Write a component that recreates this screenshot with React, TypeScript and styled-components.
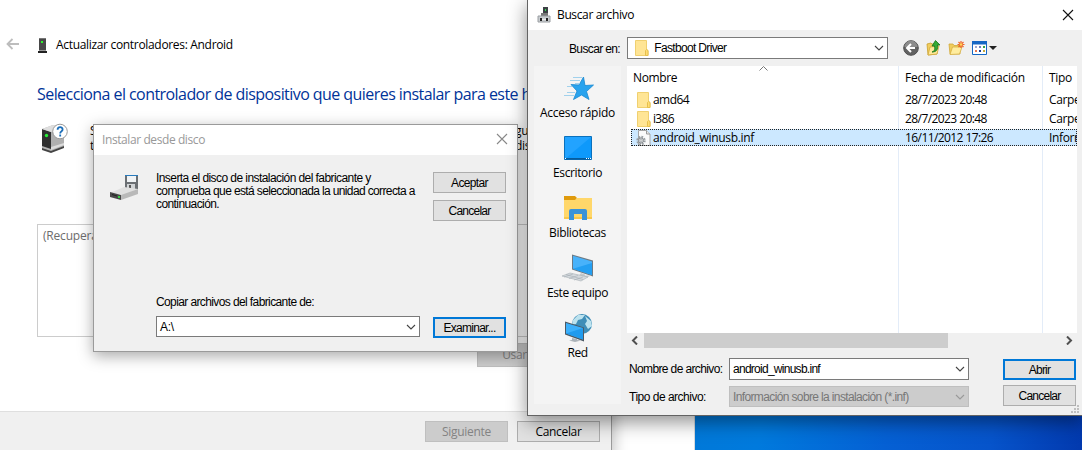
import React from "react";
import styled, { createGlobalStyle, css } from "styled-components";

const GlobalStyle = createGlobalStyle`
  * { box-sizing: border-box; }
  body { margin: 0; overflow: hidden; }
  svg { display: block; flex: none; }
`;

const Desktop = styled.main`
  position: relative;
  width: 1082px;
  height: 450px;
  overflow: hidden;
  background: linear-gradient(100deg, #0078d7 64%, #007add 72%, #0560d4 83%, #0654cb 92%, #0239ae 100%);
`;

/* Segoe-like caption text */
const uiFont = css`
  font-family: "Open Sans", "Noto Sans", sans-serif;
  font-size: 12px;
`;
/* Narrow text of the classic shell dialogs */
const shellFont = css`
  font-family: "Liberation Sans", Arial, sans-serif;
  font-size: 12px;
`;

const Label = styled.span<{ $track?: number; $shell?: boolean; $color?: string }>`
  ${(p) => (p.$shell ? shellFont : uiFont)}
  letter-spacing: ${(p) => p.$track ?? (p.$shell ? -0.63 : -0.35)}px;
  color: ${(p) => p.$color ?? "#000"};
  line-height: 16px;
  white-space: pre;
`;

const Button = styled.button<{ $primary?: boolean; $wide?: boolean }>`
  display: flex;
  align-items: center;
  justify-content: center;
  flex: none;
  width: ${(p) => (p.$wide ? 83 : 73)}px;
  height: 21px;
  padding: 0;
  background: #e1e1e1;
  border: ${(p) => (p.$primary ? "2px solid #0078d7" : "1px solid #adadad")};
  &:disabled {
    background: #ccc;
    border-color: #bfbfbf;
  }
`;

const Combo = styled.div<{ $w: number; $h: number; $disabled?: boolean }>`
  display: flex;
  align-items: center;
  flex: none;
  width: ${(p) => p.$w}px;
  height: ${(p) => p.$h}px;
  padding: 0 3px 0 3px;
  background: ${(p) => (p.$disabled ? "#ccc" : "#fff")};
  border: 1px solid ${(p) => (p.$disabled ? "#bfbfbf" : "#7a7a7a")};
  > svg:first-child { margin-left: 4px; }
  > svg:last-child { margin-left: auto; }
`;

/* Background window */
const BlankWindow = styled.section`
  position: absolute;
  left: 560px;
  top: -10px;
  width: 135px;
  height: 480px;
  background: #fff;
  border-right: 1px solid #d8dce0;
`;

/* Driver wizard */
const Wizard = styled.section`
  position: absolute;
  left: 0;
  top: 0;
  width: 612px;
  height: 460px;
  display: flex;
  flex-direction: column;
  background: #fff;
  border-right: 1px solid #9b9b9b;
  box-shadow: 2px 0 14px rgba(0, 0, 0, 0.25);
`;
const WizardHeader = styled.header`
  display: flex;
  align-items: center;
  height: 30px;
  margin-top: 30px;
  padding-left: 6px;
  svg:nth-of-type(1) { position: relative; top: -1px; }
  svg:nth-of-type(2) { margin: 0 9px 0 18px; }
`;
const WizardHeading = styled.h1`
  margin: 21px 0 0 37px;
  font: 400 16px/26px "Open Sans", "Noto Sans", sans-serif;
  letter-spacing: -0.56px;
  color: #003399;
  white-space: nowrap;
  width: 490px;
  overflow: hidden;
`;
const WizardIntro = styled.div`
  display: flex;
  height: 53px;
  margin-top: 16px;
  padding-left: 40px;
`;
const IntroStart = styled.div`
  display: flex;
  flex-direction: column;
  width: 40px;
  padding-left: 22px;
  overflow: hidden;
  span { line-height: 15px; }
`;
const IntroEnd = styled(IntroStart)`
  width: 20px;
  margin-left: 407px;
  padding-left: 0;
`;
const DriverList = styled.div`
  width: 538px;
  height: 113px;
  margin: 48px 0 0 37px;
  padding: 1px 5px;
  border: 1px solid #ccc;
`;
const DiskRow = styled.div`
  padding: 6px 0 0 477px;
  button { height: 24px; padding: 0 8px 0 0; }
`;
const WizardFooter = styled.footer`
  display: flex;
  gap: 9px;
  margin-top: auto;
  height: 49px;
  padding: 9px 11px 0 425px;
  background: #f0f0f0;
  border-top: 1px solid #dfdfdf;
`;

/* Install-from-disk dialog */
const DiskDialog = styled.section`
  position: absolute;
  left: 93px;
  top: 124px;
  width: 425px;
  height: 228px;
  background: #f0f0f0;
  border: 1px solid #9a9a9a;
  box-shadow: 0 4px 14px rgba(0, 0, 0, 0.34);
`;
const TitleBar = styled.header<{ $h: number }>`
  display: flex;
  align-items: center;
  justify-content: space-between;
  height: ${(p) => p.$h}px;
  padding: 0 8px 0 8px;
  background: #fff;
`;
const DiskTitle = styled(TitleBar)`
  padding-right: 9px;
  svg { margin-bottom: 2px; }
`;
const DiskTop = styled.div`
  display: flex;
  height: 137px;
  padding: 17px 0 0 15px;
  > svg { margin-top: 1px; }
`;
const DiskMessage = styled.p`
  width: 277px;
  margin: 0 0 0 17px;
  display: flex;
  flex-direction: column;
  span { line-height: 13px; }
`;
const ButtonStack = styled.div<{ $gap: number }>`
  display: flex;
  flex-direction: column;
  gap: ${(p) => p.$gap}px;
`;
const DiskField = styled.div`
  padding-left: 62px;
`;
const DiskFieldRow = styled.div`
  display: flex;
  align-items: flex-start;
  gap: 13px;
  margin-top: 6px;
  button { margin-top: 1px; }
`;

/* File picker */
const FileDialog = styled.section`
  position: absolute;
  left: 527px;
  top: -1px;
  width: 556px;
  height: 417px;
  background: #f0f0f0;
  border: 1px solid #636363;
  box-shadow: 0 6px 18px rgba(0, 0, 0, 0.44);
`;
const TitleGroup = styled.div`
  display: flex;
  align-items: center;
  gap: 6px;
  padding-left: 1px;
`;
const PickerToolbar = styled.div`
  display: flex;
  align-items: center;
  height: 36px;
  padding-left: 41px;
`;
const LookIn = styled.div`
  width: 58px;
`;
const ToolIcons = styled.div`
  display: flex;
  align-items: center;
  gap: 7px;
  margin-left: 15px;
`;
const PickerBody = styled.div`
  display: flex;
  gap: 6px;
  padding-left: 6px;
`;
const Places = styled.nav`
  display: flex;
  flex-direction: column;
  width: 87px;
  height: 338px;
  background: #f4f4f4;
`;
const Place = styled.div`
  display: flex;
  flex-direction: column;
  align-items: center;
  gap: 1px;
  height: 60px;
  padding-top: 6px;
`;
const PickerMain = styled.div`
  width: 450px;
`;
const FileTable = styled.div`
  height: 267px;
  background:
    linear-gradient(#e3ecf8, #e3ecf8) 271px 0 / 1px 100% no-repeat,
    linear-gradient(#e3ecf8, #e3ecf8) 415px 0 / 1px 100% no-repeat,
    #fff;
`;
const fileColumns = css`
  display: grid;
  grid-template-columns: 272px 144px 34px;
  align-items: center;
  > * { overflow: hidden; }
`;
const TableHead = styled.div`
  ${fileColumns}
  position: relative;
  height: 24px;
  > span { padding-left: 6px; }
  > svg { position: absolute; left: 132px; top: 0; }
`;
const FileRow = styled.div<{ $selected?: boolean }>`
  ${fileColumns}
  grid-template-columns: 267px 144px 35px;
  height: 19px;
  margin-left: 4px;
  ${(p) =>
    p.$selected &&
    css`
      height: 17px;
      margin-top: 1px;
      background: #cce8ff;
      outline: 1px dotted #222;
      outline-offset: -1px;
    `}
  > span { padding-left: 7px; }
`;
const FileName = styled.div`
  display: flex;
  align-items: center;
  padding-left: 4px;
`;
const FileIcon = styled.div`
  display: flex;
  justify-content: center;
  width: 18px;
`;
const ScrollBar = styled.div`
  display: flex;
  align-items: center;
  height: 15px;
  padding: 0 4px 0 4px;
  justify-content: space-between;
`;
const ScrollThumb = styled.div`
  width: 304px;
  height: 15px;
  margin: 0 auto 0 6px;
  background: #cdcdcd;
`;
const FieldsRow = styled.div`
  display: flex;
  justify-content: space-between;
  padding: 10px 1px 0 2px;
  > div:last-child { padding-top: 1px; }
`;
const Fields = styled.div`
  display: grid;
  grid-template-columns: 100px 240px;
  row-gap: 6px;
  align-items: center;
`;
const Grip = styled.svg`
  position: absolute;
  right: 2px;
  bottom: 1px;
`;

const Chevron = ({ color = "#444" }: { color?: string }) => (
  <svg width="10" height="8" viewBox="0 0 10 8">
    <path d="M1 2l4 4 4-4" fill="none" stroke={color} strokeWidth="1.1" />
  </svg>
);
const Close = ({ color }: { color: string }) => (
  <svg width="12" height="12" viewBox="0 0 12 12">
    <path d="M1 1l10 10M11 1L1 11" stroke={color} strokeWidth="1.1" />
  </svg>
);
const BackArrow = () => (
  <svg width="14" height="12" viewBox="0 0 14 12">
    <path d="M6.5 1L1.5 6l5 5M2 6h11" fill="none" stroke="#bdbdbd" strokeWidth="1.8" />
  </svg>
);
const TowerSmall = () => (
  <svg width="9" height="15" viewBox="0 0 9 15">
    <path d="M1 0h7v13H1z" fill="#484848" />
    <path d="M1 0h7v1H1z" fill="#777" />
    <path d="M0 13h9v2H0z" fill="#222" />
    <path d="M1 12h7v1H1z" fill="#999" />
    <path d="M3 3h2v2H3z" fill="#2cf52c" />
  </svg>
);
const TowerQuestion = () => (
  <svg width="28" height="30" viewBox="0 0 28 30">
    <path d="M2 6L13 2l11 3v18L11 29 2 26z" fill="#b5b5b5" />
    <path d="M11 9l13-4v18l-13 5z" fill="#b0b0b0" />
    <path d="M2 6l9 3v17l-9-3z" fill="#303030" />
    <path d="M2 6L13 2l11 3-13 4z" fill="#dedede" />
    <path d="M2 25l9 3 13-5v2l-13 5-9-3z" fill="#444" />
    <path d="M11 24l13-4v2l-13 5z" fill="#dcdcdc" />
    <circle cx="6.5" cy="12.5" r="1.7" fill="#26ed36" />
    <circle cx="20" cy="8.5" r="7.3" fill="#fff" stroke="#999" />
    <path d="M17.6 6.8c0-3.500 5-3.300 5-.4 0 2-2.400 2-2.400 4M20.200 11.600v1.800" fill="none" stroke="#1a6db8" strokeWidth="1.800" />
  </svg>
);
const DiskDrive = () => (
  <svg width="30" height="28" viewBox="0 0 30 28">
    <path d="M16 2h13v14H16z" fill="#6b6f73" />
    <path d="M18 3h9v6h-9z" fill="#f0f3f5" />
    <path d="M16 2h13v1H16z" fill="#277abd" />
    <path d="M18 11h8v5h-8z" fill="#d1d4d6" />
    <path d="M20 12h2v4h-2z" fill="#555" />
    <path d="M1 20l14-6 14 2-15 6z" fill="#e0e0e0" />
    <path d="M12 22l17-6v5l-17 6z" fill="#b9b9b9" />
    <path d="M1 19l11 3v5L1 24z" fill="#484848" />
    <path d="M3 21l5 1.500v1L3 22z" fill="#222" />
    <path d="M9 23h2v2H9z" fill="#36cf43" />
  </svg>
);
const DeviceSmall = () => (
  <svg width="14" height="16" viewBox="0 0 14 16">
    <path d="M6 0h5v8H6z" fill="#3c4145" />
    <path d="M8 2h1v2H8z" fill="#30e34d" />
    <path d="M4 6h7v3H4z" fill="#777" />
    <path d="M1 9h12v6H1z" fill="#c9cdd0" stroke="#9a9ea2" />
    <path d="M3 11h2v3H3zM9 11h2v3H9z" fill="#222" />
    <path d="M5 12h4v1H5z" fill="#eee" />
  </svg>
);
const Folder = () => (
  <svg width="14" height="16" viewBox="0 0 14 16">
    <path d="M.5.5h11v9l1.500 1v5H.5z" fill="#ffe595" stroke="#f0d070" />
    <path d="M10.500 15.500v-5l1-1 1.500 1v5z" fill="#ffdc74" stroke="#e6c04d" />
  </svg>
);
const InfFile = () => (
  <svg width="16" height="16" viewBox="0 0 16 16">
    <path d="M2.500.5h8l3.500 3.500v11.500H2.500z" fill="#fafafa" stroke="#a5a5a5" />
    <path d="M10.500.5V4H14" fill="#e8e8e8" stroke="#9a9a9a" />
    <circle cx="5" cy="10.500" r="3.700" fill="none" stroke="#999fa3" strokeWidth="2" strokeDasharray="1.700 1.200" />
    <circle cx="5" cy="10.500" r="2.600" fill="#d7dadc" stroke="#84898d" />
    <circle cx="5" cy="10.500" r="1" fill="#fff" stroke="#84898d" strokeWidth=".6" />
  </svg>
);
const BackRound = () => (
  <svg width="16" height="16" viewBox="0 0 16 16">
    <circle cx="8" cy="8" r="7.300" fill="#626262" stroke="#505050" />
    <path d="M1.500 7a6.500 6.500 0 0113 0z" fill="#8c8c8c" />
    <path d="M8 4L4 8l4 4M4.500 8H12" fill="none" stroke="#fff" strokeWidth="2" />
  </svg>
);
const FolderUp = () => (
  <svg width="15" height="16" viewBox="0 0 15 16">
    <path d="M1 4l4-1 1 1h5v10l-9 1z" fill="#f1cd5d" stroke="#c89e2c" strokeWidth=".8" />
    <path d="M2 15l2-8 9-1-2 8z" fill="#ffe99a" stroke="#d0a83a" strokeWidth=".8" />
    <path d="M6 12c3-1 3-3 2.500-6H6l3.500-5.500L14 5h-2.500C12 9 11 12 6 12z" fill="#35aa35" stroke="#167218" strokeWidth=".8" />
  </svg>
);
const FolderNew = () => (
  <svg width="17" height="16" viewBox="0 0 17 16">
    <path d="M1 4h4l1 1.500h6V14H2z" fill="#f1cd5d" stroke="#d0a83a" strokeWidth=".8" />
    <path d="M2 14.500L4.500 7H14l-2.500 7z" fill="#ffed9f" stroke="#d7b044" strokeWidth=".8" />
    <path d="M13 1v7M9.500 4.500h7M10.500 2l5 5M15.500 2l-5 5" stroke="#ef6528" strokeWidth="1.200" />
    <circle cx="13" cy="4.500" r="1.300" fill="#ffd65c" />
  </svg>
);
const ViewMenu = () => (
  <svg width="25" height="15" viewBox="0 0 25 15">
    <path d="M.5.5h14v13H.5z" fill="#fff" stroke="#1567c4" />
    <path d="M0 0h15v3.500H0z" fill="#1567c4" />
    <path d="M3 5h2v2H3z" fill="#a0a8ce" />
    <path d="M7 5h2v2H7z" fill="#6b7fbf" />
    <path d="M11 5h2v2h-2z" fill="#36a244" />
    <path d="M3 9h2v2H3z" fill="#e77950" />
    <path d="M7 9h2v2H7z" fill="#173d9b" />
    <path d="M11 9h2v2h-2z" fill="#c5a83a" />
    <path d="M17 5h8l-4 4z" fill="#222" />
  </svg>
);
const Star = () => (
  <svg width="32" height="32" viewBox="0 0 32 32">
    <path d="M21.500 5l1.500 8.500 8.500-.5-7 6.500 2.500 8-7.500-4.500-8 4.500 3.500-8.500-6-6.500 8 .5z" fill="#28a3ee" stroke="#1688d0" strokeWidth=".8" />
    <path d="M11 5.500h9M8 8.500h10M13 11.500h5M5 14.500h5M2 23.500h10M5 20.500h8" stroke="#8cc8ea" strokeWidth=".8" />
  </svg>
);
const DesktopIcon = () => (
  <svg width="32" height="32" viewBox="0 0 32 32">
    <path d="M2.500 4.500h27v23h-27z" fill="#22a3ff" stroke="#0a71bd" />
    <path d="M3 27L29 5v22z" fill="#0e99fb" />
    <path d="M3 26h26v1.500H3z" fill="#075c9c" />
    <path d="M3 26.500h1M24 26.500h1M26 26.500h1M28 26.500h1" stroke="#fff" />
  </svg>
);
const Libraries = () => (
  <svg width="32" height="32" viewBox="0 0 32 32">
    <path d="M2 4h11l2 2-2 3H2z" fill="#df9a0c" />
    <path d="M2 8h11l2-2h15v21H2z" fill="#ffd76a" />
    <path d="M2 25h28v2H2z" fill="#f8c74a" />
    <path d="M7 28V19q0-2 2-2h14q2 0 2 2v9h-5v-6h-8v6z" fill="#3b93d9" />
  </svg>
);
const Computer = () => (
  <svg width="32" height="32" viewBox="0 0 32 32">
    <path d="M10 2.500l21 6v16l-21-7z" fill="#6c7a85" />
    <path d="M11 3.800l19 5.700v13.500l-19-6.300z" fill="#48b2fa" />
    <path d="M11 16.700L30 11v12z" fill="#239ff2" />
    <path d="M19 21l4 1.500v1h6l-4 2-8-2z" fill="#c3c9cd" />
    <path d="M0 24l8-3 18 4-7 4z" fill="#d5dade" stroke="#a8b0b5" strokeWidth=".6" />
    <path d="M4 22.500l17 5M2 25l9-3M7 26.500l9-3M12 28l9-3" stroke="#a5adb3" strokeWidth=".6" />
  </svg>
);
const Network = () => (
  <svg width="32" height="32" viewBox="0 0 32 32">
    <circle cx="20" cy="12" r="10" fill="#3e8db7" />
    <path d="M11 8l5-5 7 0-3 4-4 1-2 4-4 1zM23 4l6 5 1 5-4 3-3-5 2-3z" fill="#bce2ee" />
    <path d="M3 9.500l19 6v14L3 22.500z" fill="#4c5964" />
    <path d="M4 11l17 5v11.500L4 21.500z" fill="#3cb0fb" />
    <path d="M4 21.500L21 16v11.500z" fill="#209bee" />
    <path d="M10 26l5 1v1l4 .5-6 1.500-6-1.500 3-.5z" fill="#aab2b8" />
  </svg>
);

const places = [
  { name: "Acceso rápido", icon: <Star />, track: -0.26 },
  { name: "Escritorio", icon: <DesktopIcon />, track: -0.37 },
  { name: "Bibliotecas", icon: <Libraries />, track: -0.32 },
  { name: "Este equipo", icon: <Computer />, track: -0.41 },
  { name: "Red", icon: <Network />, track: -0.5 },
];
const files = [
  { name: "amd64", track: -0.57, date: "28/7/2023 20:48", type: "Carpe", icon: <Folder /> },
  { name: "i386", track: -0.66, date: "28/7/2023 20:48", type: "Carpe", icon: <Folder /> },
  { name: "android_winusb.inf", track: -0.32, date: "16/11/2012 17:26", type: "Inform", icon: <InfFile />, selected: true },
];

export default function App() {
  return (
    <Desktop>
      <GlobalStyle />
      <BlankWindow />
      <Wizard>
        <WizardHeader>
          <BackArrow />
          <TowerSmall />
          <Label $track={-0.32}>Actualizar controladores: Android</Label>
        </WizardHeader>
        <WizardHeading>Selecciona el controlador de dispositivo que quieres instalar para este h</WizardHeading>
        <WizardIntro>
          <TowerQuestion />
          <IntroStart>
            <Label>S</Label>
            <Label>t</Label>
          </IntroStart>
          <IntroEnd>
            <Label>gu</Label>
            <Label>dis</Label>
          </IntroEnd>
        </WizardIntro>
        <DriverList>
          <Label $track={-0.2} $color="#6d6d6d">(Recupera</Label>
        </DriverList>
        <DiskRow>
          <Button $wide disabled>
            <Label $track={-0.35} $color="#838383">Usar</Label>
          </Button>
        </DiskRow>
        <WizardFooter>
          <Button $wide disabled>
            <Label $track={-0.29} $color="#838383">Siguiente</Label>
          </Button>
          <Button $wide>
            <Label $track={-0.34}>Cancelar</Label>
          </Button>
        </WizardFooter>
      </Wizard>

      <DiskDialog>
        <DiskTitle $h={30}>
          <Label $track={-0.41} $color="#999">Instalar desde disco</Label>
          <Close color="#888" />
        </DiskTitle>
        <DiskTop>
          <DiskDrive />
          <DiskMessage>
            <Label $shell $track={-0.57}>Inserta el disco de instalación del fabricante y</Label>
            <Label $shell>comprueba que está seleccionada la unidad correcta a</Label>
            <Label $shell $track={-0.59}>continuación.</Label>
          </DiskMessage>
          <ButtonStack $gap={7}>
            <Button><Label $shell>Aceptar</Label></Button>
            <Button><Label $shell $track={-0.75}>Cancelar</Label></Button>
          </ButtonStack>
        </DiskTop>
        <DiskField>
          <Label $shell $track={-0.61}>Copiar archivos del fabricante de:</Label>
          <DiskFieldRow>
            <Combo $w={264} $h={21}>
              <Label $shell $track={-0.3}>A:\</Label>
              <Chevron />
            </Combo>
            <Button $primary><Label $shell $track={-0.73}>Examinar...</Label></Button>
          </DiskFieldRow>
        </DiskField>
      </DiskDialog>

      <FileDialog>
        <TitleBar $h={30}>
          <TitleGroup>
            <DeviceSmall />
            <Label $track={-0.37}>Buscar archivo</Label>
          </TitleGroup>
          <Close color="#111" />
        </TitleBar>
        <PickerToolbar>
          <LookIn>
            <Label $shell>Buscar en:</Label>
          </LookIn>
          <Combo $w={261} $h={22}>
            <Folder />
            <Label $shell $track={-0.67}>  Fastboot Driver</Label>
            <Chevron />
          </Combo>
          <ToolIcons>
            <BackRound />
            <FolderUp />
            <FolderNew />
            <ViewMenu />
          </ToolIcons>
        </PickerToolbar>
        <PickerBody>
          <Places>
            {places.map((p) => (
              <Place key={p.name}>
                {p.icon}
                <Label $track={p.track}>{p.name}</Label>
              </Place>
            ))}
          </Places>
          <PickerMain>
            <FileTable>
              <TableHead>
                <Label $track={-0.39}>Nombre</Label>
                <Label $track={-0.22}>Fecha de modificación</Label>
                <Label $track={-0.3}>Tipo</Label>
                <svg width="9" height="5" viewBox="0 0 9 5">
                  <path d="M.5 4.500l4-4 4 4" fill="none" stroke="#777" />
                </svg>
              </TableHead>
              {files.map((f) => (
                <FileRow key={f.name} $selected={f.selected}>
                  <FileName>
                    <FileIcon>{f.icon}</FileIcon>
                    <Label $track={f.track}>{f.name}</Label>
                  </FileName>
                  <Label $track={-0.58}>{f.date}</Label>
                  <Label>{f.type}</Label>
                </FileRow>
              ))}
            </FileTable>
            <ScrollBar>
              <svg width="7" height="9" viewBox="0 0 7 9">
                <path d="M6 .5l-4 4 4 4" fill="none" stroke="#505050" strokeWidth="2" />
              </svg>
              <ScrollThumb />
              <svg width="7" height="9" viewBox="0 0 7 9">
                <path d="M1 .5l4 4-4 4" fill="none" stroke="#505050" strokeWidth="2" />
              </svg>
            </ScrollBar>
            <FieldsRow>
              <Fields>
                <Label $shell>Nombre de archivo:</Label>
                <Combo $w={240} $h={22}>
                  <Label $shell $track={-0.73}>android_winusb.inf</Label>
                  <Chevron />
                </Combo>
                <Label $shell $track={-0.5}>Tipo de archivo:</Label>
                <Combo $w={240} $h={21} $disabled>
                  <Label $shell $color="#777">Información sobre la instalación (*.inf)</Label>
                  <Chevron color="#999" />
                </Combo>
              </Fields>
              <ButtonStack $gap={5}>
                <Button $primary><Label $shell $track={-0.8}>Abrir</Label></Button>
                <Button><Label $shell $track={-0.75}>Cancelar</Label></Button>
              </ButtonStack>
            </FieldsRow>
          </PickerMain>
        </PickerBody>
        <Grip width="9" height="9" viewBox="0 0 9 9">
          <path d="M6 0h2v2H6zM3 3h2v2H3zM6 3h2v2H6zM0 6h2v2H0zM3 6h2v2H3zM6 6h2v2H6z" fill="#bfbfbf" />
        </Grip>
      </FileDialog>
    </Desktop>
  );
}
